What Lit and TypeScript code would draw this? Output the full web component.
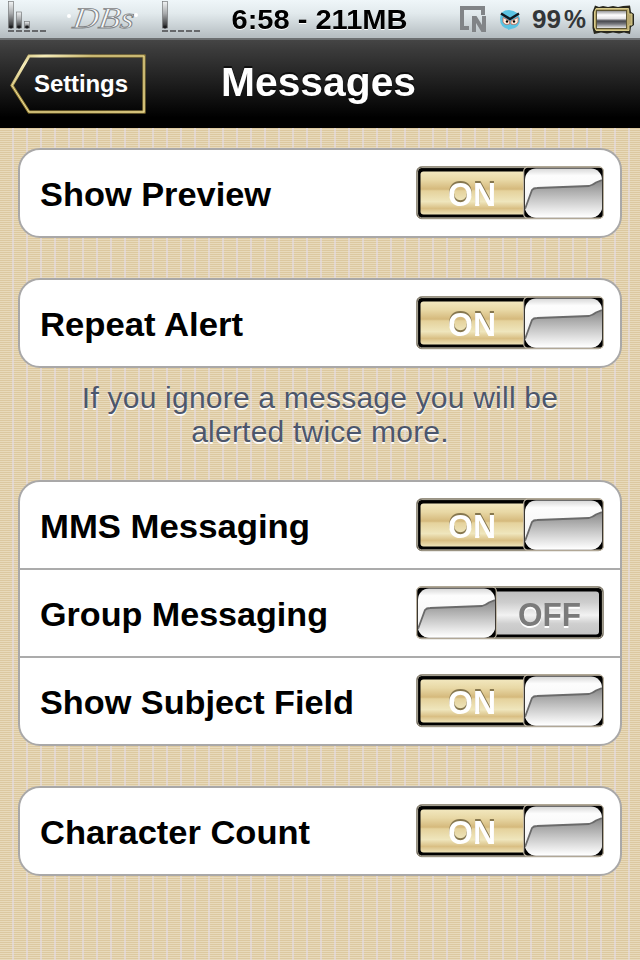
import { LitElement, html, css, svg } from "lit";
import { customElement, property } from "lit/decorators.js";

@customElement("status-bar")
class StatusBar extends LitElement {
  static styles = css`
    :host { display: grid; grid-template-columns: 230px 180px 230px; height: 40px; box-sizing: border-box;
      background: linear-gradient(#eff6f9, #e2eaed 35%, #b6bec2 96%); border-bottom: 2px solid #6b6e70; color: #050505; }
    svg { display: block; }
    .time { font-size: 27px; font-weight: bold; filter: drop-shadow(0 1px 0 #fff); }
    .script { font: italic 30px/30px "Liberation Serif", serif; fill: #f8fafb; stroke: #7f8386; stroke-width: .9px; }
    .pct { font-size: 26px; font-weight: bold; fill: #333638; }
  `;
  render() {
    return html`
      <svg width="230" height="38" viewBox="0 0 230 38">
        <defs>
          <linearGradient id="b" x2="0" y2="1"><stop offset="0" stop-color="#f2f4f5"/><stop offset=".45" stop-color="#a8abad"/><stop offset="1" stop-color="#202123"/></linearGradient>
        </defs>
        <g fill="url(#b)" stroke="#77797b" stroke-width=".7">
          <rect x="8.5" y="1.5" width="5" height="26.500"/><rect x="16.5" y="12" width="5" height="16"/><rect x="24.5" y="21.5" width="5" height="6.500"/><rect x="162.500" y="1.500" width="5" height="26.500"/>
        </g>
        <g fill="#1c1d1f"><circle cx="11" cy="27" r="1.600"/><circle cx="19" cy="27" r="1.600"/><circle cx="27" cy="27" r="1.600"/><circle cx="165" cy="27" r="1.600"/></g>
        <g fill="#66686b">
          ${[8, 16, 24, 32, 40, 162, 170, 178, 186, 194].map((x) => svg`<rect x=${x} y="30" width="6" height="2"/>`)}
        </g>
        <text class="script" transform="translate(72 28) skewX(-8)" textLength="61" lengthAdjust="spacingAndGlyphs">DBs</text>
        <circle cx="69" cy="16" r="2" fill="#fff"/><circle cx="136" cy="15" r="2" fill="#fff"/>
      </svg>
      <svg width="180" height="38" viewBox="230 0 180 38"><text class="time" x="231.500" y="28.500" textLength="176" lengthAdjust="spacingAndGlyphs">6:58 - 211MB</text></svg>
      <svg width="230" height="38" viewBox="410 0 230 38">
        <defs><linearGradient id="bt" x2="0" y2="1"><stop offset="0" stop-color="#8b8c8f"/><stop offset=".25" stop-color="#fff"/><stop offset=".45" stop-color="#e4e4e6"/><stop offset=".58" stop-color="#45464c"/><stop offset=".75" stop-color="#77787d"/><stop offset="1" stop-color="#f4f4f4"/></linearGradient></defs>
        <path d="M460 6H485V15H481V10H464V26H469V30H460Z" fill="#818487"/>
        <path d="M472 32V16H476.500L482 25V16H486V32H481.500L476 23V32Z" fill="#818487"/>
        <path d="M500 19Q500 10 509 10Q519 11 520 19Q520 28 511 29L508 30L508 29Q500 27 500 19Z" fill="#5cc3e2"/>
        <path d="M503 17.500L509.500 21V24Q504.500 25.500 503 22ZM518 17.500L511 21V24Q516.500 25.500 518 22Z" fill="#fff0df" stroke="#c9553f" stroke-width=".7"/>
        <path d="M501 13.500L510 19L519 13.500" fill="none" stroke="#101820" stroke-width="2.400"/>
        <circle cx="507" cy="21.500" r="1.200"/><circle cx="514" cy="21.500" r="1.200"/>
        <text class="pct" x="532" y="28" textLength="29" lengthAdjust="spacingAndGlyphs">99</text>
        <text class="pct" x="564" y="28" textLength="22" lengthAdjust="spacingAndGlyphs">%</text>
        <path d="M595 5.500L599 7L603 6L608 7L613 6L618 7L623 6L630 5.500L631 12L634 14V25L631 27L630 34L624 32.500L619 33.500L613 32.500L607 33.500L601 32.500L594 34L592.500 28V12Z" fill="#28271c"/>
        <path d="M596 8.500H628.500L629 14H632V25H629V30.500H596L594.500 27V12Z" fill="#b7a76d" stroke="#d8cc8a" stroke-width="1"/>
        <rect x="596.500" y="10.500" width="30" height="18" fill="url(#bt)" stroke="#5c5533"/>
      </svg>
    `;
  }
}

@customElement("nav-bar")
class NavBar extends LitElement {
  static styles = css`
    :host { display: grid; grid-template-columns: 146px 1fr 146px; height: 88px; background: linear-gradient(#454545, #3a3a3a 12%, #000 88%); color: #fff; }
    svg { display: block; }
    .label { font-size: 24px; font-weight: bold; }
    .title { font-size: 40px; font-weight: bold; filter: drop-shadow(0 -2px 0 rgba(0, 0, 0, .6)); }
  `;
  render() {
    return html`
      <svg width="146" height="88" viewBox="0 0 146 88">
        <defs><linearGradient id="g" x2="1" y2="1"><stop offset="0" stop-color="#a38d3c"/><stop offset=".12" stop-color="#fff7c8"/><stop offset=".3" stop-color="#a58e3e"/><stop offset=".7" stop-color="#a58e3e"/><stop offset="1" stop-color="#b89f4d"/></linearGradient></defs>
        <path d="M29 16H144V72H29L12 45.500Z" fill="none" stroke="url(#g)" stroke-width="3"/>
        <path d="M29 16H144V72H29L12 45.500Z" fill="none" stroke="#eee2a6" stroke-width="1"/>
        <text class="label" x="34" y="52" fill="#fff" textLength="94">Settings</text>
      </svg>
      <svg width="348" height="88" viewBox="146 0 348 88"><text class="title" x="221" y="56" fill="#fff" textLength="195" lengthAdjust="spacingAndGlyphs">Messages</text></svg>
    `;
  }
}

@customElement("gold-switch")
class GoldSwitch extends LitElement {
  @property({ type: Boolean }) on = false;
  static styles = css`
    :host { display: block; width: 188px; height: 54px; }
    svg { display: block; }
    .word { font-size: 33px; font-weight: bold; }
    .lit { fill: #fff; filter: drop-shadow(0 -1.5px 0 #85764e); }
    .dim { fill: #7b7b7b; filter: drop-shadow(0 2px 0 #fff); }
  `;
  render() {
    const on = this.on;
    const knob = on ? 107 : 0;
    return html`<svg width="188" height="54" viewBox="0 0 188 54">
      <defs>
        <linearGradient id="on" x2="0" y2="1"><stop offset="0" stop-color="#f2e7be"/><stop offset=".2" stop-color="#e8d8a5"/><stop offset=".41" stop-color="#d5b97c"/><stop offset=".45" stop-color="#e5d29c"/><stop offset=".7" stop-color="#efe6bd"/><stop offset=".86" stop-color="#d9bf84"/><stop offset="1" stop-color="#eee3b8"/></linearGradient>
        <linearGradient id="off" x2="0" y2="1"><stop offset="0" stop-color="#bfbfbf"/><stop offset=".25" stop-color="#cdcdcd"/><stop offset=".55" stop-color="#f2f2f2"/><stop offset=".75" stop-color="#cfcfcf"/><stop offset="1" stop-color="#c5c5c5"/></linearGradient>
        <linearGradient id="top" x2="0" y2="1"><stop offset="0" stop-color="#d5d5d5"/><stop offset=".15" stop-color="#fdfdfd"/><stop offset="1" stop-color="#efefef"/></linearGradient>
        <linearGradient id="low" x2="0" y2="1"><stop offset="0" stop-color="#868686"/><stop offset=".2" stop-color="#a2a2a2"/><stop offset=".5" stop-color="#c8c8c8"/><stop offset=".95" stop-color="#fff"/></linearGradient>
        <clipPath id="k"><rect x="2" y="2.500" width="77" height="49" rx="11"/></clipPath>
      </defs>
      <rect x=".7" y=".7" width="186.600" height="52" rx="5" fill="#000" stroke="#928a78"/>
      <rect x="1.600" y="1.600" width="184.800" height="50.200" rx="4" fill="#000" stroke="#f8efd8" stroke-width=".7"/>
      <rect x="4.500" y="5.500" width="178.500" height="43" rx="3" fill=${on ? "url(#on)" : "url(#off)"}/>
      ${on
        ? svg`<text class="word lit" x="32" y="40" textLength="48" lengthAdjust="spacingAndGlyphs">ON</text>`
        : svg`<text class="word dim" x="102" y="40" textLength="63" lengthAdjust="spacingAndGlyphs">OFF</text>`}
      <g transform=${`translate(${knob} 0)`}>
        <rect x=".7" y="1.200" width="79.600" height="51" rx="4" fill="#000" stroke="#c5bba8" stroke-width="1.200"/>
        <g clip-path="url(#k)">
          <rect x="1" y="2" width="79" height="51" fill="url(#top)"/>
          <path d="M2 43L9 24Q10.500 22 14 22L66 20Q70 19 73 16.500L79 14V53H2Z" fill="url(#low)"/>
          <path d="M2 43L9 24Q10.500 22 14 22L66 20Q70 19 73 16.500L79 14" fill="none" stroke="#6a6a6a" stroke-width="1.800"/>
        </g>
      </g>
    </svg>`;
  }
}

type Row = [label: string, on: boolean, width: number];

@customElement("settings-group")
class SettingsGroup extends LitElement {
  @property({ attribute: false }) rows: Row[] = [];
  static styles = css`
    :host { display: block; border: 2px solid #a9a8a8; border-radius: 22px; background: #fff; overflow: hidden; }
    .row { display: flex; height: 86px; align-items: center; justify-content: space-between; padding: 0 16px 0 20px; }
    .row + .row { border-top: 2px solid #ababab; }
    .label { display: block; overflow: visible; font-size: 34px; font-weight: bold; }
  `;
  render() {
    return this.rows.map(([label, on, w]) => html`<div class="row">
      <svg class="label" width=${w} height="50"><text x="0" y="38" textLength=${w} lengthAdjust="spacingAndGlyphs">${label}</text></svg>
      <gold-switch ?on=${on}></gold-switch>
    </div>`);
  }
}

@customElement("app-root")
class AppRoot extends LitElement {
  static styles = css`
    :host { display: flex; flex-direction: column; width: 640px; height: 960px; overflow: hidden; font-family: "Liberation Sans", Arial, sans-serif; }
    main { flex: 1; display: flex; flex-direction: column; gap: 40px; padding: 20px 18px;
      background:
        repeating-linear-gradient(90deg, transparent 0 12px, rgba(228,220,230,.6) 12px 14px),
        repeating-linear-gradient(#dcc8a0 0 1px, #e8dabb 1px 2px); }
    .noted { display: flex; flex-direction: column; gap: 13px; margin-bottom: -9px; }
    .note { display: flex; flex-direction: column; align-items: center; margin: 0; height: 68px; font-size: 30px; line-height: 34px; letter-spacing: .22px; color: #4c566c; text-shadow: 0 2px 0 rgba(255,255,255,.9); white-space: nowrap; }
  `;
  render() {
    return html`
      <status-bar></status-bar>
      <nav-bar></nav-bar>
      <main>
        <settings-group .rows=${[["Show Preview", true, 231]]}></settings-group>
        <div class="noted">
          <settings-group .rows=${[["Repeat Alert", true, 203]]}></settings-group>
          <div class="note"><span>If you ignore a message you will be</span><span>alerted twice more.</span></div>
        </div>
        <settings-group .rows=${[["MMS Messaging", true, 270], ["Group Messaging", false, 288], ["Show Subject Field", true, 314]]}></settings-group>
        <settings-group .rows=${[["Character Count", true, 270]]}></settings-group>
      </main>
    `;
  }
}
